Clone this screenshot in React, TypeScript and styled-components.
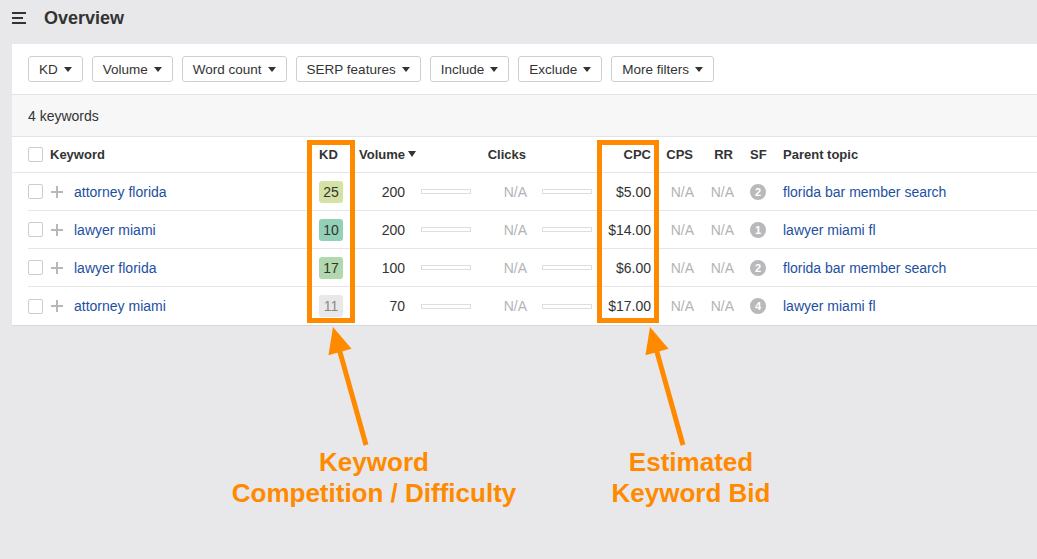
import styled, { createGlobalStyle } from "styled-components";

const GlobalStyle = createGlobalStyle`
  html, body {
    margin: 0;
    padding: 0;
    background: #e8e8ea;
    font-family: "Liberation Sans", Arial, sans-serif;
    color: #333;
  }
`;

const orange = "#ff8a00";
const linkBlue = "#1d4f9f";

const Page = styled.div`
  position: relative;
  width: 1037px;
  height: 559px;
  overflow: hidden;
  background: #e8e8ea;
`;

const TopBar = styled.div`
  height: 36px;
  display: flex;
  align-items: center;
  gap: 18px;
  padding-left: 12px;
  margin-bottom: 8px;
`;

const Burger = styled.div`
  width: 14px;
  display: flex;
  flex-direction: column;
  gap: 3px;
  margin-top: -1px;

  span {
    display: block;
    height: 2px;
    background: #333;
  }
  span:nth-child(2) {
    width: 11px;
  }
`;

const Title = styled.h1`
  margin: 0;
  font-size: 18px;
  font-weight: 700;
  color: #333;
`;

const Panel = styled.div`
  margin-left: 12px;
  background: #fff;
  border-bottom: 1px solid #d8d8da;
`;

const Filters = styled.div`
  display: flex;
  gap: 9px;
  padding: 12px 16px;
  border-bottom: 1px solid #e3e3e5;
`;

const FilterButton = styled.button`
  height: 26px;
  display: flex;
  align-items: center;
  gap: 6px;
  padding: 0 10px;
  background: #fff;
  border: 1px solid #cfcfd2;
  border-radius: 3px;
  font-family: inherit;
  font-size: 13.5px;
  color: #333;
`;

const Caret = styled.span`
  width: 0;
  height: 0;
  border-left: 4px solid transparent;
  border-right: 4px solid transparent;
  border-top: 5px solid #333;
`;

const CountBar = styled.div`
  height: 41px;
  display: flex;
  align-items: center;
  padding-left: 16px;
  background: #f7f7f8;
  border-bottom: 1px solid #e3e3e5;
  font-size: 14px;
  color: #333;
`;

const columns =
  "22px 258px 47px 56px 65px 56px 65px 61px 42px 40px 35px 1fr";

const HeaderRow = styled.div`
  display: grid;
  grid-template-columns: ${columns};
  align-items: center;
  height: 36px;
  box-sizing: border-box;
  padding-left: 16px;
  border-bottom: 1px solid #e6e6e8;
  font-size: 13px;
  font-weight: 700;
  color: #333;
`;

const Row = styled.div`
  display: grid;
  grid-template-columns: ${columns};
  align-items: center;
  height: 38px;
  box-sizing: border-box;
  margin-left: 16px;
  border-bottom: 1px solid #e6e6e8;
  font-size: 14px;

  &:last-child {
    border-bottom: none;
  }
`;

const Cell = styled.div<{ $align?: "left" | "right"; $pl?: number; $pr?: number; $muted?: boolean }>`
  display: flex;
  align-items: center;
  justify-content: ${(p) => (p.$align === "right" ? "flex-end" : "flex-start")};
  padding-left: ${(p) => p.$pl ?? 0}px;
  padding-right: ${(p) => p.$pr ?? 0}px;
  color: ${(p) => (p.$muted ? "#b3b3b6" : "inherit")};
  white-space: nowrap;
`;

const Checkbox = styled.span`
  width: 13px;
  height: 13px;
  border: 1px solid #cdcdd0;
  border-radius: 2px;
  background: #fff;
`;

const Plus = styled.span`
  position: relative;
  width: 12px;
  height: 12px;
  margin-left: 1px;
  margin-right: 11px;

  &::before,
  &::after {
    content: "";
    position: absolute;
    background: #b8b8bb;
  }
  &::before {
    left: 0;
    right: 0;
    top: 5px;
    height: 2px;
  }
  &::after {
    top: 0;
    bottom: 0;
    left: 5px;
    width: 2px;
  }
`;

const Link = styled.a`
  color: ${linkBlue};
  text-decoration: none;
`;

const KdBadge = styled.span<{ $bg: string }>`
  width: 24px;
  height: 22px;
  display: flex;
  align-items: center;
  justify-content: center;
  border-radius: 3px;
  background: ${(p) => p.$bg};
  color: ${(p) => (p.$bg === "#e8e8ea" ? "#888" : "#333")};
  font-size: 14px;
`;

const SortCaret = styled.span`
  display: inline-block;
  margin-left: 3px;
  width: 0;
  height: 0;
  border-left: 4px solid transparent;
  border-right: 4px solid transparent;
  border-top: 6px solid #333;
  transform: translateY(-1px);
`;

const Bar = styled.span`
  width: 48px;
  height: 3px;
  border: 1px solid #dedee0;
  background: #fff;
`;

const SfDot = styled.span`
  width: 16px;
  height: 16px;
  border-radius: 50%;
  background: #b9b9bc;
  color: #fff;
  font-size: 11px;
  font-weight: 700;
  display: flex;
  align-items: center;
  justify-content: center;
`;

const Overlay = styled.svg`
  position: absolute;
  left: 0;
  top: 0;
  pointer-events: none;
`;

const Callout = styled.div<{ $cx: number }>`
  position: absolute;
  top: 447px;
  left: ${(p) => p.$cx}px;
  transform: translateX(-50%);
  text-align: center;
  white-space: nowrap;
  font-size: 26px;
  line-height: 31px;
  font-weight: 700;
  color: ${orange};
`;

const filters = [
  "KD",
  "Volume",
  "Word count",
  "SERP features",
  "Include",
  "Exclude",
  "More filters",
];

const rows = [
  { kw: "attorney florida", kd: 25, kdBg: "#d4e2a5", vol: 200, cpc: "$5.00", sf: 2, parent: "florida bar member search" },
  { kw: "lawyer miami", kd: 10, kdBg: "#93d0b8", vol: 200, cpc: "$14.00", sf: 1, parent: "lawyer miami fl" },
  { kw: "lawyer florida", kd: 17, kdBg: "#b2d8ad", vol: 100, cpc: "$6.00", sf: 2, parent: "florida bar member search" },
  { kw: "attorney miami", kd: 11, kdBg: "#e8e8ea", vol: 70, cpc: "$17.00", sf: 4, parent: "lawyer miami fl" },
];

const Arrow = ({ x1, y1, x2, y2 }: { x1: number; y1: number; x2: number; y2: number }) => {
  // tail (x1,y1) -> tip (x2,y2)
  const dx = x2 - x1;
  const dy = y2 - y1;
  const len = Math.hypot(dx, dy);
  const ux = dx / len;
  const uy = dy / len;
  const headLen = 26;
  const headHalf = 12;
  const bx = x2 - ux * headLen;
  const by = y2 - uy * headLen;
  const px = -uy;
  const py = ux;
  return (
    <g fill={orange} stroke={orange}>
      <line x1={x1} y1={y1} x2={bx + ux * 2} y2={by + uy * 2} strokeWidth={5} />
      <polygon
        stroke="none"
        points={`${x2},${y2} ${bx + px * headHalf},${by + py * headHalf} ${bx - px * headHalf},${by - py * headHalf}`}
      />
    </g>
  );
};

export default function App() {
  return (
    <Page>
      <GlobalStyle />
      <TopBar>
        <Burger>
          <span />
          <span />
          <span />
        </Burger>
        <Title>Overview</Title>
      </TopBar>
      <Panel>
        <Filters>
          {filters.map((f) => (
            <FilterButton key={f}>
              {f}
              <Caret />
            </FilterButton>
          ))}
        </Filters>
        <CountBar>4 keywords</CountBar>
        <HeaderRow>
          <Cell>
            <Checkbox />
          </Cell>
          <Cell>Keyword</Cell>
          <Cell $pl={11}>KD</Cell>
          <Cell $pl={4}>
            Volume
            <SortCaret />
          </Cell>
          <Cell />
          <Cell $align="right" $pr={6}>Clicks</Cell>
          <Cell />
          <Cell $align="right" $pr={7}>CPC</Cell>
          <Cell $align="right" $pr={7}>CPS</Cell>
          <Cell $align="right" $pr={7}>RR</Cell>
          <Cell $pl={10}>SF</Cell>
          <Cell $pl={8}>Parent topic</Cell>
        </HeaderRow>
        {rows.map((r) => (
          <Row key={r.kw}>
            <Cell>
              <Checkbox />
            </Cell>
            <Cell>
              <Plus />
              <Link href="#">{r.kw}</Link>
            </Cell>
            <Cell $pl={11}>
              <KdBadge $bg={r.kdBg}>{r.kd}</KdBadge>
            </Cell>
            <Cell $align="right" $pr={6}>{r.vol}</Cell>
            <Cell $pl={10}>
              <Bar />
            </Cell>
            <Cell $align="right" $pr={5} $muted>N/A</Cell>
            <Cell $pl={10}>
              <Bar />
            </Cell>
            <Cell $align="right" $pr={7}>{r.cpc}</Cell>
            <Cell $align="right" $pr={6} $muted>N/A</Cell>
            <Cell $align="right" $pr={6} $muted>N/A</Cell>
            <Cell $pl={10}>
              <SfDot>{r.sf}</SfDot>
            </Cell>
            <Cell $pl={8}>
              <Link href="#">{r.parent}</Link>
            </Cell>
          </Row>
        ))}
      </Panel>

      <Overlay width={1037} height={559} viewBox="0 0 1037 559">
        <rect x={309.5} y={142.5} width={43} height={178} fill="none" stroke={orange} strokeWidth={5} />
        <rect x={599.5} y={142.5} width={57} height={178} fill="none" stroke={orange} strokeWidth={5} />
        <Arrow x1={366} y1={445} x2={333} y2={327} />
        <Arrow x1={683} y1={445} x2={650} y2={327} />
      </Overlay>
      <Callout $cx={374}>
        Keyword
        <br />
        Competition / Difficulty
      </Callout>
      <Callout $cx={691}>
        Estimated
        <br />
        Keyword Bid
      </Callout>
    </Page>
  );
}
